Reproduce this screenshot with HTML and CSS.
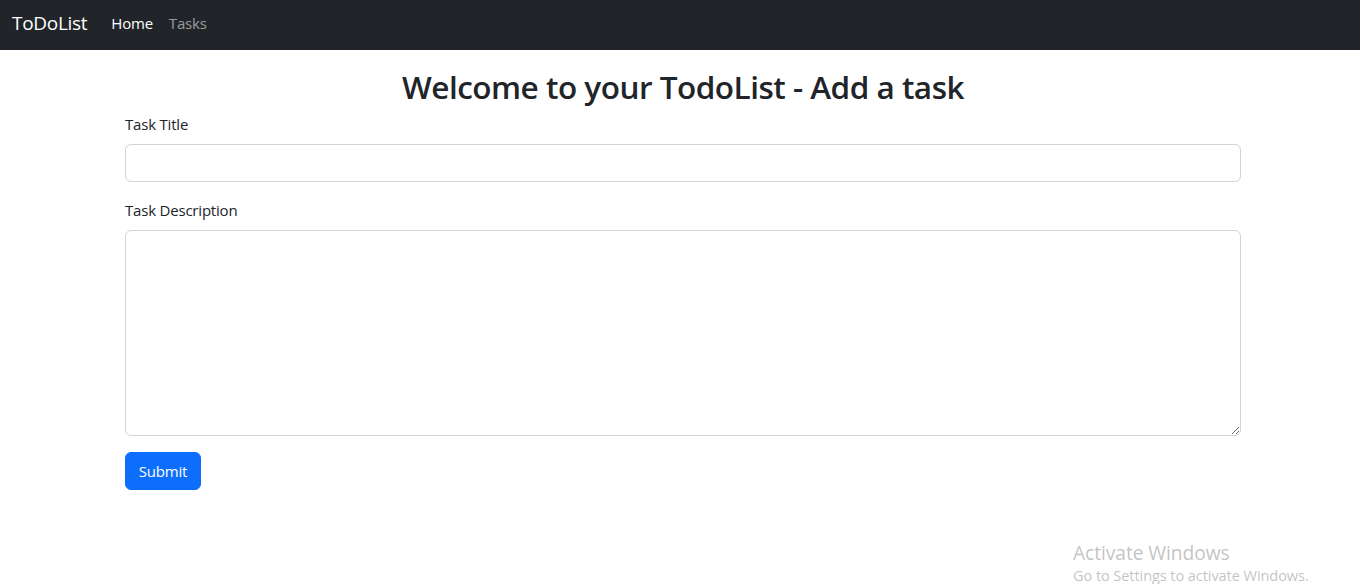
FILE: index.html
```html
<!DOCTYPE html>
<html lang="en">
<head>
<meta charset="utf-8">
<title>ToDoList</title>
<link rel="stylesheet" href="styles.css">
</head>
<body>
<nav class="navbar">
  <a class="brand" href="#">ToDoList</a>
  <ul class="nav">
    <li><a class="nav-link active" href="#">Home</a></li>
    <li><a class="nav-link" href="#">Tasks</a></li>
  </ul>
</nav>
<main class="container">
  <h2 class="title">Welcome to your TodoList - Add a task</h2>
  <form class="form">
    <div class="field">
      <label class="label" for="title">Task Title</label>
      <input class="control" id="title" type="text">
    </div>
    <div class="field">
      <label class="label" for="desc">Task Description</label>
      <textarea class="control area" id="desc"></textarea>
    </div>
    <button class="btn" type="submit">Submit</button>
  </form>
</main>
<div class="watermark">
  <div class="wm-title">Activate Windows</div>
  <div class="wm-sub">Go to Settings to activate Windows.</div>
</div>
</body>
</html>
```
FILE: styles.css
```css
* { box-sizing: border-box; }
html, body { margin: 0; padding: 0; }
body {
  font-family: "Open Sans", "Noto Sans", sans-serif;
  font-size: 16px;
  line-height: 1.5;
  color: #212529;
  background: #fff;
  width: 1360px;
  height: 584px;
  overflow: hidden;
  position: relative;
}
.navbar {
  height: 50px;
  background: #212529;
  display: flex;
  align-items: center;
  padding: 0 12px 5px;
}
.brand {
  color: #fff;
  text-decoration: none;
  font-size: 19px;
  letter-spacing: -0.3px;
  margin-right: 16px;
  line-height: 30px;
}
.nav {
  list-style: none;
  margin: 0;
  padding: 0;
  display: flex;
}
.nav-link {
  display: block;
  padding: 8px;
  color: rgba(255,255,255,0.55);
  text-decoration: none;
  font-size: 15px;
  letter-spacing: -0.2px;
  line-height: 24px;
}
.nav-link.active { color: #fff; }
.container {
  width: 1140px;
  margin-left: 113px;
  padding: 0 12px;
}
.title {
  margin: 18px 0 6px;
  text-align: center;
  font-size: 31.5px;
  font-weight: 600;
  line-height: 38px;
  letter-spacing: -0.5px;
}
.form { display: flex; flex-direction: column; }
.field { margin-bottom: 16px; display: flex; flex-direction: column; }
.label {
  font-size: 15px;
  line-height: 24px;
  margin-bottom: 8px;
  letter-spacing: -0.2px;
}
.control {
  display: block;
  width: 100%;
  height: 38px;
  border: 1px solid #ced4da;
  border-radius: 6px;
  padding: 6px 12px;
  font: inherit;
  background: #fff;
}
.area { height: 206px; resize: vertical; }
.btn {
  align-self: flex-start;
  width: 76px;
  height: 38px;
  background: #0d6efd;
  color: #fff;
  border: 1px solid #0d6efd;
  border-radius: 6px;
  font-family: inherit;
  font-size: 15px;
  letter-spacing: -0.2px;
  padding: 0;
}
.watermark {
  position: absolute;
  left: 1073px;
  top: 540px;
  color: rgba(120,120,120,0.45);
  white-space: nowrap;
}
.wm-title { font-size: 19.3px; line-height: 26px; letter-spacing: -0.1px; }
.wm-sub { font-size: 14.6px; line-height: 18px; letter-spacing: -0.1px; }
```
